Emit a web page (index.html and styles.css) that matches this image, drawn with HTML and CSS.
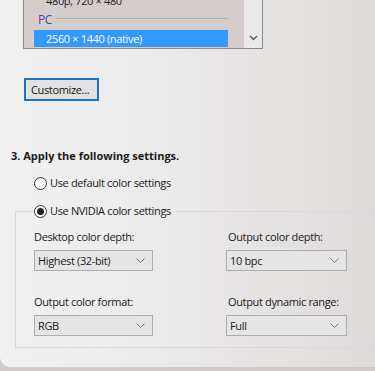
FILE: index.html
```html
<!DOCTYPE html>
<html lang="en">

<head>
  <meta charset="UTF-8">
  <meta name="viewport" content="width=device-width, initial-scale=1.0">
  <title>Change resolution</title>
  <link rel="stylesheet" href="styles.css">
</head>

<body>
  <div class="window">

    <div class="listbox">
      <ul class="list-items">
        <li class="list-row">480p, 720 × 480</li>
        <li class="list-group">
          <span>PC</span>
        </li>
        <li class="list-row selected">2560 × 1440 (native)</li>
      </ul>
      <div class="scrollbar">
        <svg class="scroll-arrow" width="9" height="6" viewBox="0 0 9 6">
          <path d="M1 1 L4.5 4.5 L8 1" fill="none" stroke="#555" stroke-width="1.4" />
        </svg>
      </div>
    </div>

    <button class="btn">Customize...</button>

    <h3 class="step-title">3. Apply the following settings.</h3>

    <label class="radio first">
      <input type="radio" name="color" value="default">
      <span>Use default color settings</span>
    </label>

    <fieldset class="group">
      <legend>
        <label class="radio">
          <input type="radio" name="color" value="nvidia" checked>
          <span>Use NVIDIA color settings</span>
        </label>
      </legend>

      <div class="fields">
        <div class="field">
          <label for="depth">Desktop color depth:</label>
          <div class="dropdown" id="depth">
            <span>Highest (32-bit)</span>
            <svg width="9" height="6" viewBox="0 0 9 6">
              <path d="M0.5 0.5 L4.5 4.5 L8.5 0.5" fill="none" stroke="#777" stroke-width="1" />
            </svg>
          </div>
        </div>
        <div class="field right">
          <label for="out-depth">Output color depth:</label>
          <div class="dropdown" id="out-depth">
            <span>10 bpc</span>
            <svg width="9" height="6" viewBox="0 0 9 6">
              <path d="M0.5 0.5 L4.5 4.5 L8.5 0.5" fill="none" stroke="#777" stroke-width="1" />
            </svg>
          </div>
        </div>
        <div class="field">
          <label for="format">Output color format:</label>
          <div class="dropdown" id="format">
            <span>RGB</span>
            <svg width="9" height="6" viewBox="0 0 9 6">
              <path d="M0.5 0.5 L4.5 4.5 L8.5 0.5" fill="none" stroke="#777" stroke-width="1" />
            </svg>
          </div>
        </div>
        <div class="field right">
          <label for="range">Output dynamic range:</label>
          <div class="dropdown" id="range">
            <span>Full</span>
            <svg width="9" height="6" viewBox="0 0 9 6">
              <path d="M0.5 0.5 L4.5 4.5 L8.5 0.5" fill="none" stroke="#777" stroke-width="1" />
            </svg>
          </div>
        </div>
      </div>
    </fieldset>

  </div>
</body>

</html>
```

FILE: styles.css
```css
html,
body {
  margin: 0;
  height: 371px;
  overflow: hidden;
}

body {
  background: #d2caca;
  font-family: "Open Sans", "Noto Sans", sans-serif;
  font-size: 11px;
  letter-spacing: -0.35px;
  color: #1a1a1a;
}

.window {
  height: 367px;
  overflow: hidden;
  display: flex;
  flex-direction: column;
  align-items: flex-start;
  background: linear-gradient(to right, #f1f1f1 0%, #ebeaea 45%, #dedad9 100%);
  border-bottom-left-radius: 10px;
}

/* resolution list, top part is scrolled out of view */
.listbox {
  display: flex;
  margin-left: 23px;
  width: 238px;
  height: 48px;
  border: 1px solid #8e8a8a;
  border-top: 0;
  background: #d4cdcc;
}

.list-items {
  flex: 1;
  list-style: none;
  margin: 0;
  padding: 0 16px 1px 10px;
  display: flex;
  flex-direction: column;
  justify-content: flex-end;
  overflow: hidden;
}

.list-row {
  height: 17px;
  line-height: 17px;
  padding-left: 12px;
  flex-shrink: 0;
  color: #222;
}

.list-group {
  display: flex;
  align-items: center;
  height: 21px;
  padding-left: 4px;
  flex-shrink: 0;
  color: #3a4fb0;
  font-size: 12px;
}

.list-group::after {
  content: "";
  flex: 1;
  height: 1px;
  margin-left: 4px;
  margin-top: -2px;
  background: #b5aeae;
}

.list-row.selected {
  background: #3399ff;
  color: #fff;
}

.scrollbar {
  width: 18px;
  background: #e9e9e9;
  display: flex;
  align-items: flex-end;
  justify-content: center;
  padding-bottom: 7px;
  box-sizing: border-box;
}

.btn {
  margin: 29px 0 0 24px;
  width: 75px;
  height: 23px;
  padding: 0 0 0 5px;
  text-align: left;
  border: 2px solid #1a73c9;
  background: #e1e1e1;
  font: inherit;
  letter-spacing: inherit;
  color: #111;
}

.step-title {
  margin: 47px 0 0 11px;
  font-size: 11px;
  line-height: 16px;
  font-weight: 700;
  letter-spacing: 0;
}

.radio {
  display: flex;
  align-items: center;
  line-height: 16px;
  color: #1a1a1a;
}

.radio input {
  appearance: none;
  margin: 0 3px 0 0;
  width: 13px;
  height: 13px;
  border: 1px solid #333;
  border-radius: 50%;
  background: #fff;
  box-sizing: border-box;
  display: grid;
  place-items: center;
}

.radio input:checked::before {
  content: "";
  width: 7px;
  height: 7px;
  border-radius: 50%;
  background: #222;
}

.radio.first {
  margin: 11px 0 0 34px;
}

.group {
  margin: 12px -40px 0 15px;
  padding: 10px 0 11px 18px;
  border: 1px solid #d9d7d7;
  align-self: stretch;
}

.group legend {
  margin-left: -1px;
  padding: 0 6px 0 1px;
}

.fields {
  display: grid;
  grid-template-columns: 119px 121px;
  column-gap: 73px;
  row-gap: 23px;
}

.field {
  display: flex;
  flex-direction: column;
  gap: 5px;
}

.field label {
  line-height: 16px;
}

.field.right label {
  padding-left: 2px;
}

.dropdown {
  height: 21px;
  box-sizing: border-box;
  border: 1px solid #adadad;
  background: #e5e5e5;
  display: flex;
  align-items: center;
  justify-content: space-between;
  padding: 0 7px 0 3px;
}

.dropdown svg {
  margin-top: 1px;
}
```
